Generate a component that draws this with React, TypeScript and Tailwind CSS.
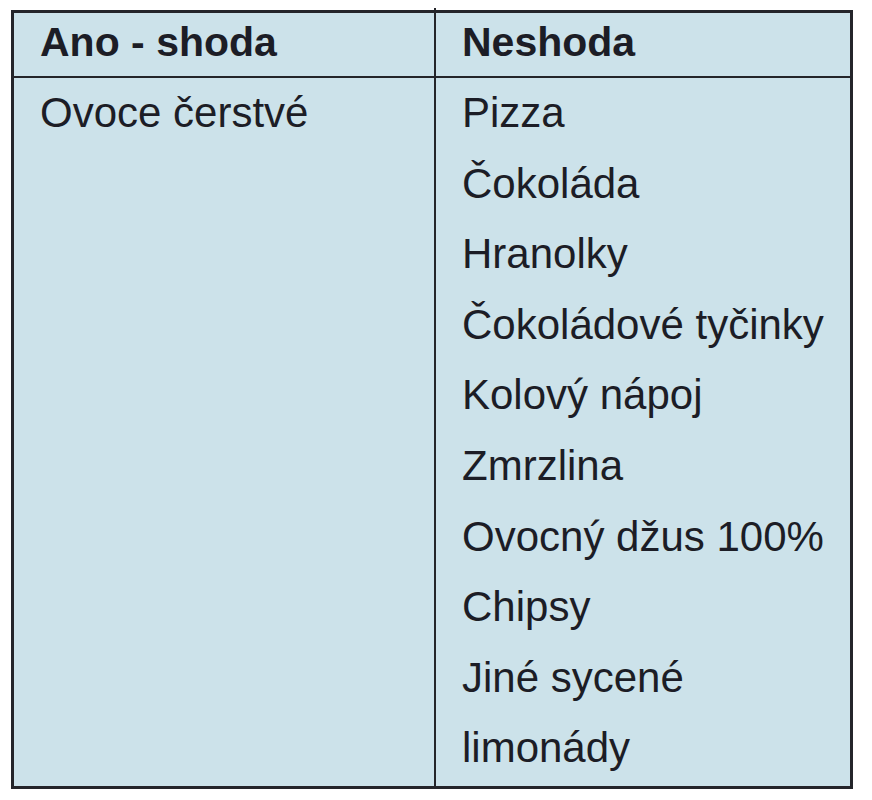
import React from "react";

const items = [
  "Pizza",
  "Čokoláda",
  "Hranolky",
  "Čokoládové tyčinky",
  "Kolový nápoj",
  "Zmrzlina",
  "Ovocný džus 100%",
  "Chipsy",
  "Jiné sycené",
  "limonády",
];

export default function App() {
  return (
    <div
      className="min-h-[800px] bg-white pt-[10px] pl-[11px]"
      style={{ fontFamily: '"Liberation Sans", Arial, sans-serif' }}
    >
      <div className="relative w-[842px] border-[3px] border-[#24252a] bg-[#cce2ea] text-[#1c1d26]">
        <div className="absolute left-[420px] top-[-5px] h-[5px] w-[2px] bg-[#24252a]" />
        <div className="grid grid-cols-[422px_1fr] border-b-[2px] border-[#24252a]">
          <div className="h-[63px] border-r-[2px] border-[#24252a] pl-[26px] text-[41px] font-bold leading-[58px]">
            Ano - shoda
          </div>
          <div className="h-[63px] pl-[26px] text-[41px] font-bold leading-[58px]">
            Neshoda
          </div>
        </div>
        <div className="grid grid-cols-[422px_1fr]">
          <div className="border-r-[2px] border-[#24252a] pl-[26px] text-[42px] leading-[70.6px]">
            Ovoce čerstvé
          </div>
          <div className="flex flex-col pb-[2px] pl-[26px] text-[42px] leading-[70.6px]">
            {items.map((t) => (
              <div key={t}>{t}</div>
            ))}
          </div>
        </div>
      </div>
    </div>
  );
}
